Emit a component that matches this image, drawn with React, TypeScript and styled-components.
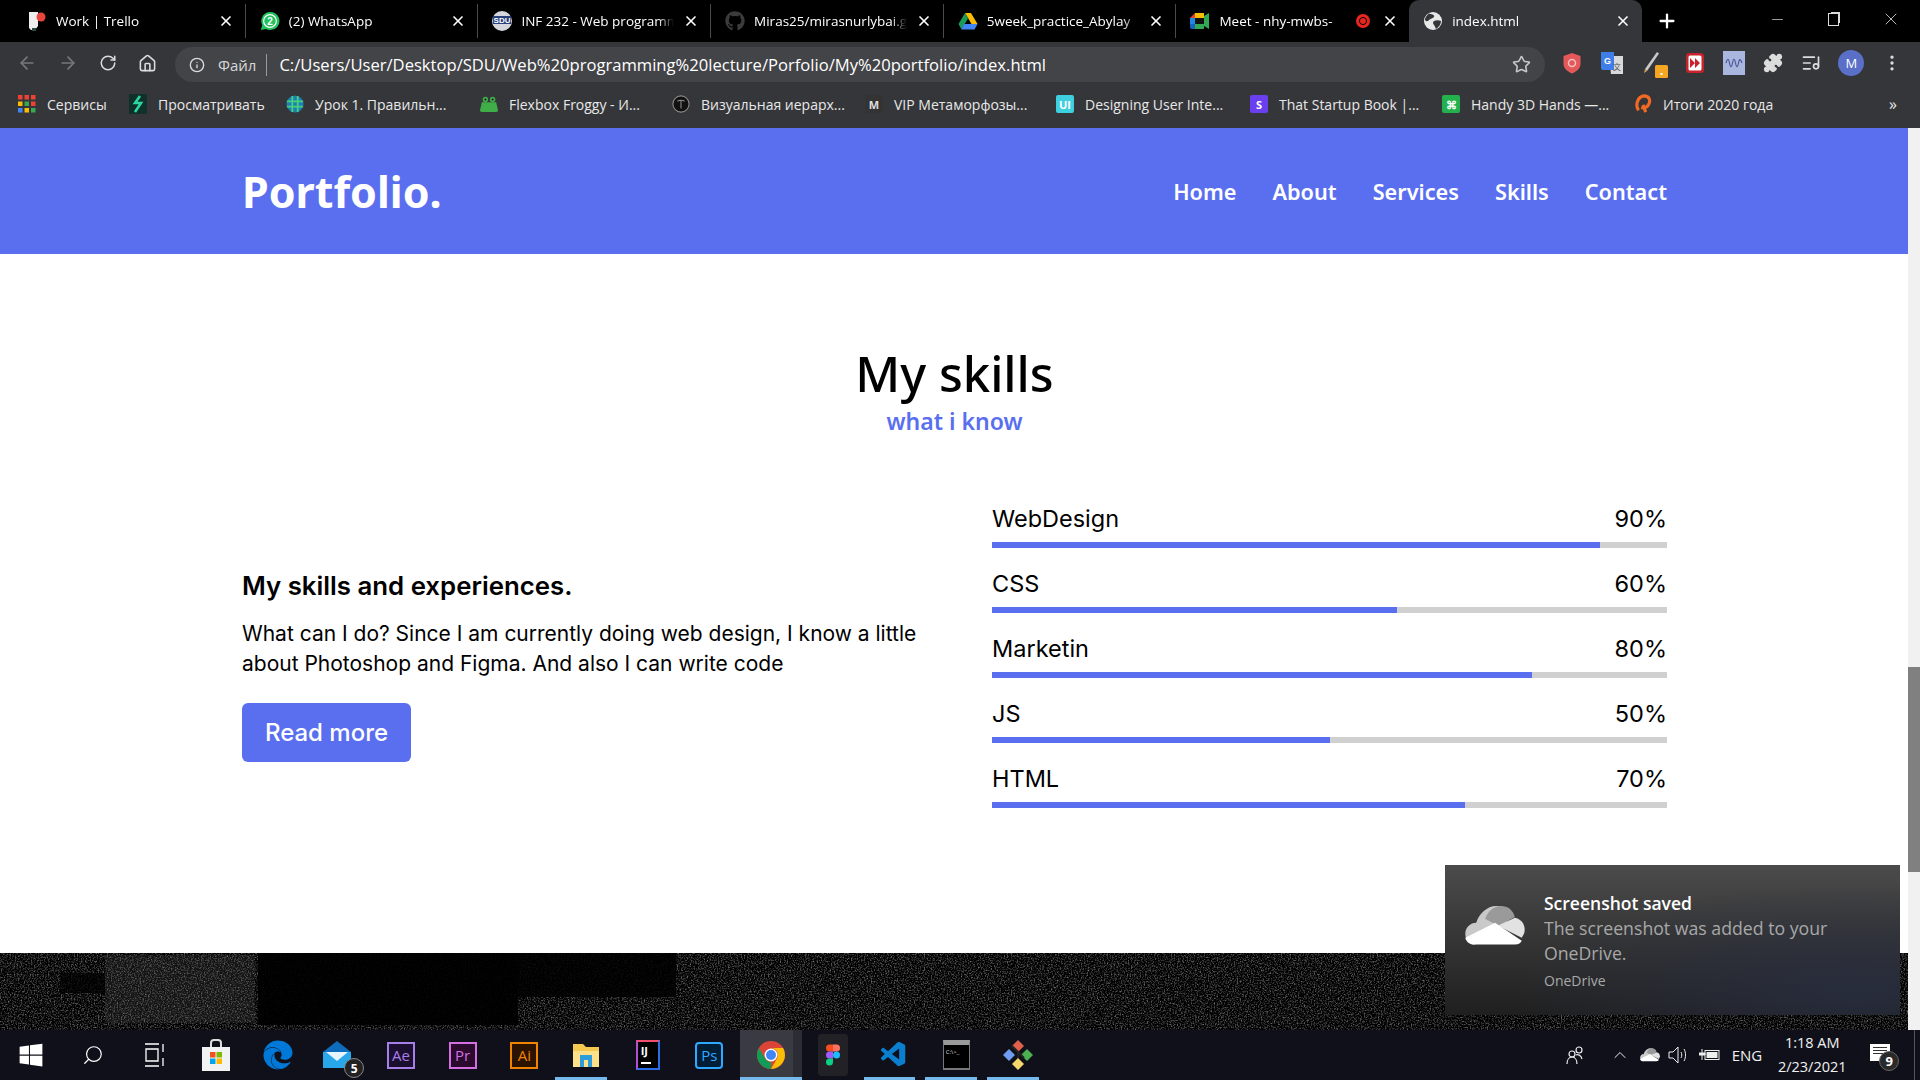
import React, { FC, ReactNode } from "react";
import styled, { createGlobalStyle } from "styled-components";
import { ArrowLeft, ArrowRight, ChevronUp, EllipsisVertical, House, Info, ListMusic, Minus, Plus, Puzzle, RotateCw, Search, Star, X } from "lucide-react";
import { FaGithub, FaWindows, FaEdge } from "react-icons/fa";
import { VscVscode } from "react-icons/vsc";

const BLUE = "#5a6ff0";

const GlobalStyle = createGlobalStyle`
  html, body { margin: 0; padding: 0; background: #000; }
  * { box-sizing: border-box; }
`;

const Drive = () => (
  <svg width="20" height="18" viewBox="0 0 20 18">
    <path d="M7 1h6l6.5 11h-6z" fill="#fbbc04" />
    <path d="M7 1l3 5.5L3.5 17.5.5 12z" fill="#1a9b57" />
    <path d="M6 12h13.5l-3 5.5h-13z" fill="#4285f4" />
  </svg>
);

const Meet = () => (
  <svg width="20" height="18" viewBox="0 0 20 18">
    <path d="M5 1h9v5H5z" fill="#fbbc04" />
    <path d="M5 1v5H0z" fill="#ea4335" />
    <path d="M0 6h5v6H0z" fill="#1e88e5" />
    <path d="M0 12h5v5H2a2 2 0 01-2-2z" fill="#1565c0" />
    <path d="M5 12h9v5H5z" fill="#34a853" />
    <path d="M14 4l5-3v16l-5-3z" fill="#34a853" />
    <path d="M5 6h9v6H5z" fill="#111" />
  </svg>
);

const TrelloFav = () => (
  <svg width="20" height="20" viewBox="0 0 20 20">
    <path d="M2 1h9v14l-3 4H4l-2-2z" fill="#eee" />
    <path d="M5 17h4v3H5z" fill="#2c4a45" />
    <circle cx="14" cy="6" r="4.5" fill="#e8453c" />
  </svg>
);

const WhatsFav = () => (
  <svg width="22" height="22" viewBox="0 0 22 22">
    <path d="M1 21l1.500-5.500A10 10 0 1111 21a10 10 0 01-4.500-1.100z" fill="#22c15e" />
    <circle cx="11" cy="11" r="7" fill="none" stroke="#fff" strokeWidth="1.300" />
    <text x="11" y="15" fontSize="11" fontWeight="700" textAnchor="middle" fill="#fff" fontFamily="Liberation Sans, sans-serif">2</text>
  </svg>
);

const SduFav = () => (
  <svg width="20" height="20" viewBox="0 0 20 20">
    <circle cx="10" cy="10" r="10" fill="#d6d6de" />
    <path d="M1 5h18v8H1z" fill="#27407c" />
    <text x="10" y="12" fontSize="8" fontWeight="700" textAnchor="middle" fill="#fff" fontFamily="Liberation Sans, sans-serif">SDU</text>
  </svg>
);

const GlobeFav = () => (
  <svg width="18" height="18" viewBox="0 0 18 18">
    <circle cx="9" cy="9" r="9" fill="#e8e8e8" />
    <path d="M5 1.500c2 1 4 .5 5 2s-2 3-3.500 3.500S4 10 2 9 1 5 5 1.500zM10 9c2-1 5-1 7 0 0 3-2 6-5 8-1-2-1-3-2-4s-1.500-3 0-4z" fill="#35363a" />
  </svg>
);

const Shield = () => (
  <svg width="20" height="22" viewBox="0 0 20 22">
    <path d="M10 1l8.5 3v8c0 4.500-4 7.500-8.500 9.500C5.500 19.500 1.500 16.500 1.500 12V4z" fill="#e5585a" />
    <circle cx="10" cy="11" r="3.500" fill="none" stroke="#f3c2c2" strokeWidth="1.500" />
  </svg>
);

const Translate = () => (
  <svg width="24" height="26" viewBox="0 0 24 26">
    <path d="M9 6h14v18H11z" fill="#d9d9d9" />
    <path d="M1 2h13v18H3a2 2 0 01-2-2z" fill="#3f7ee8" />
    <text x="7.500" y="14" fontSize="9" fontWeight="700" textAnchor="middle" fill="#fff" fontFamily="Liberation Sans, sans-serif">G</text>
    <text x="17" y="20" fontSize="8" textAnchor="middle" fill="#555" fontFamily="Noto Sans CJK SC, sans-serif">文</text>
  </svg>
);

const Pen = () => (
  <svg width="26" height="30" viewBox="0 0 26 30">
    <path d="M3 21L15 4l2 1.500L5 23z" fill="#c9c9c9" />
    <path d="M3 21l2 2-3 2z" fill="#d9a441" />
    <rect x="13" y="17" width="13" height="13" rx="1.500" fill="#f5a623" />
    <rect x="18.500" y="25" width="2" height="2" fill="#fff" />
  </svg>
);

const RedExt = () => (
  <svg width="20" height="22" viewBox="0 0 20 22">
    <rect x="1" y="1" width="18" height="20" rx="3.500" fill="#c8232c" />
    <rect x="3.500" y="3.500" width="13" height="15" rx="1.500" fill="#fff" />
    <path d="M5 6l5 5-5 5zM10 6l5 5-5 5z" fill="#c8232c" />
  </svg>
);

const WaveExt = () => (
  <svg width="22" height="24" viewBox="0 0 22 24">
    <rect width="22" height="24" fill="#a9b6de" />
    <path d="M3 12c1.500-5 2.500-5 3.500 0s2 5 3 0 2-5 3 0 2 5 3 0 2-4 3.500 0" fill="none" stroke="#4a5a9a" strokeWidth="1.200" />
  </svg>
);

const Grid9 = () => (
  <svg width="18" height="18" viewBox="0 0 18 18">
    {["#ea4335", "#ea4335", "#ea4335", "#fbbc04", "#34a853", "#ea4335", "#4285f4", "#fbbc04", "#34a853"].map((c, i) => (
      <rect key={i} x={(i % 3) * 6.500} y={Math.floor(i / 3) * 6.500} width="4.500" height="4.500" fill={c} />
    ))}
  </svg>
);

const Zigzag = () => (
  <svg width="18" height="20" viewBox="0 0 18 20">
    <rect width="18" height="20" fill="#10302b" />
    <path d="M11 2L6 9h6l-6 9" fill="none" stroke="#2bd9a0" strokeWidth="2.500" />
  </svg>
);

const StripedGlobe = () => (
  <svg width="20" height="20" viewBox="0 0 20 20">
    <circle cx="10" cy="10" r="9.500" fill="#1c7fb8" />
    <path d="M7 1v18M13 1v18M1 7h18M1 13h18" stroke="#46d07a" strokeWidth="2" />
  </svg>
);

const Frog = () => (
  <svg width="20" height="18" viewBox="0 0 20 18">
    <circle cx="6" cy="4" r="3" fill="#3fae49" />
    <circle cx="14" cy="4" r="3" fill="#3fae49" />
    <path d="M2 7h16l2 9a2 2 0 01-2 2H2a2 2 0 01-2-2z" fill="#3fae49" />
    <circle cx="6" cy="4" r="1" fill="#111" />
    <circle cx="14" cy="4" r="1" fill="#111" />
  </svg>
);

const RingT = () => (
  <svg width="20" height="20" viewBox="0 0 20 20" fill="none" stroke="#8a8a8a" strokeWidth="1.200">
    <circle cx="10" cy="10" r="9" fill="#111" />
    <path d="M6 7c2-1.500 6-1.500 8 0M10 6v9" />
  </svg>
);

const OrangeQ = () => (
  <svg width="20" height="22" viewBox="0 0 20 22" fill="none" stroke="#f26a21" strokeWidth="3.500">
    <path d="M5 18C1 12 4 3 11 2c6 0 8 5 5 10-2 3-5 4-8 3M10 12l3 8" />
  </svg>
);

const Mark: FC<{ bg: string; children?: ReactNode }> = ({ bg, children }) => (
  <MarkBox $bg={bg}>{children}</MarkBox>
);

const links = ["Home", "About", "Services", "Skills", "Contact"];

const skills = [
  { name: "WebDesign", value: 90 },
  { name: "CSS", value: 60 },
  { name: "Marketin", value: 80 },
  { name: "JS", value: 50 },
  { name: "HTML", value: 70 },
];

const App: FC = () => {
  const tabs = [
    { title: "Work | Trello", icon: <TrelloFav /> },
    { title: "(2) WhatsApp", icon: <WhatsFav /> },
    { title: "INF 232 - Web programming", icon: <SduFav /> },
    { title: "Miras25/mirasnurlybai.github.io", icon: <FaGithub size={20} color="#3b3b3b" /> },
    { title: "5week_practice_Abylay", icon: <Drive /> },
    { title: "Meet - nhy-mwbs-", icon: <Meet />, recording: true },
    { title: "index.html", icon: <GlobeFav />, active: true },
  ];

  const bookmarks = [
    { w: 111, title: "Сервисы", icon: <Grid9 /> },
    { w: 157, title: "Просматривать", icon: <Zigzag /> },
    { w: 194, title: "Урок 1. Правильн...", icon: <StripedGlobe /> },
    { w: 192, title: "Flexbox Froggy - И...", icon: <Frog /> },
    { w: 193, title: "Визуальная иерарх...", icon: <RingT /> },
    { w: 191, title: "VIP Метаморфозы...", icon: <Mark bg="#333"><MarkText $c="#ddd">M</MarkText></Mark> },
    { w: 194, title: "Designing User Inte...", icon: <Mark bg="#3fd0e0"><MarkText $c="#fff">UI</MarkText></Mark> },
    { w: 192, title: "That Startup Book |...", icon: <Mark bg="#6a3ff0"><MarkText $c="#fff">S</MarkText></Mark> },
    { w: 192, title: "Handy 3D Hands —...", icon: <Mark bg="#22b14c"><MarkText $c="#fff">⌘</MarkText></Mark> },
    { w: 220, title: "Итоги 2020 года", icon: <OrangeQ /> },
  ];

  return (
  <Screen>
    <GlobalStyle />
    <TabStrip>
      {tabs.map((t) => (
        <Tab key={t.title} $active={t.active}>
          <TabIcon>{t.icon}</TabIcon>
          <TabTitle>{t.title}</TabTitle>
          {t.recording && <RecDot />}
          <X size={16} strokeWidth={2.5} color="#fff" />
        </Tab>
      ))}
      <NewTab><Plus size={22} strokeWidth={2.5} color="#fff" /></NewTab>
      <WindowControls>
        <Minus size={17} strokeWidth={1} color="#ddd" />
        <RestoreBox />
        <X size={20} strokeWidth={1} color="#ddd" />
      </WindowControls>
    </TabStrip>

    <Toolbar>
      <NavButtons>
        <ArrowLeft size={20} color="#76787c" />
        <ArrowRight size={20} color="#76787c" />
        <RotateCw size={18} color="#dcdcdc" />
        <House size={19} color="#dcdcdc" />
      </NavButtons>
      <Omnibox>
        <Info size={16} color="#dcdcdc" />
        <FileLabel>Файл</FileLabel>
        <UrlText>C:/Users/User/Desktop/SDU/Web%20programming%20lecture/Porfolio/My%20portfolio/index.html</UrlText>
        <Star size={19} color="#c8c8c8" />
      </Omnibox>
      <Extensions>
        <Shield />
        <Translate />
        <Pen />
        <RedExt />
        <WaveExt />
        <Puzzle size={20} color="#dcdcdc" fill="#dcdcdc" />
        <ListMusic size={20} color="#dcdcdc" />
        <Avatar>M</Avatar>
        <EllipsisVertical size={20} color="#dcdcdc" />
      </Extensions>
    </Toolbar>

    <BookmarksBar>
      {bookmarks.map((b) => (
        <Bookmark key={b.title} $w={b.w}>
          <BookmarkIcon>{b.icon}</BookmarkIcon>
          {b.title}
        </Bookmark>
      ))}
      <MoreMarks>»</MoreMarks>
    </BookmarksBar>

    <Viewport>
      <Page>
        <NavBar>
          <Logo>Portfolio.</Logo>
          <NavLinks>
            {links.map((l) => <NavLink key={l}>{l}</NavLink>)}
          </NavLinks>
        </NavBar>

        <Section>
          <SectionTitle>My skills</SectionTitle>
          <SectionSub>what i know</SectionSub>
          <Columns>
            <About>
              <AboutTitle>My skills and experiences.</AboutTitle>
              <AboutText>What can I do? Since I am currently doing web design, I know a little about Photoshop and Figma. And also I can write code</AboutText>
              <ReadMore>Read more</ReadMore>
            </About>
            <Bars>
              {skills.map((s) => (
                <Skill key={s.name}>
                  <SkillHead>
                    <span>{s.name}</span>
                    <span>{s.value}%</span>
                  </SkillHead>
                  <Track><Fill style={{ width: `${s.value}%` }} /></Track>
                </Skill>
              ))}
            </Bars>
          </Columns>
        </Section>

        <Footer>
          <FooterNoise viewBox="0 0 1908 77" preserveAspectRatio="none">
            <filter id="grain" x="0" y="0" width="100%" height="100%">
              <feTurbulence type="fractalNoise" baseFrequency="0.7" numOctaves="3" seed="4" />
              <feColorMatrix values="0 0 0 0 1 0 0 0 0 1 0 0 0 0 1 0 0 0 1.800 -0.780" />
            </filter>
            <rect width="1908" height="77" filter="url(#grain)" opacity="0.55" />
            <rect x="105" y="2" width="150" height="68" fill="#555" opacity="0.22" />
            <rect x="258" y="0" width="260" height="72" fill="#000" opacity="0.92" />
            <rect x="518" y="0" width="158" height="44" fill="#000" opacity="0.85" />
            <rect x="60" y="20" width="45" height="20" fill="#000" opacity="0.7" />
          </FooterNoise>
        </Footer>
      </Page>
      <Scrollbar><Thumb /></Scrollbar>
    </Viewport>

    <Taskbar>
      <TaskItem><FaWindows size={26} color="#fff" /></TaskItem>
      <TaskItem><Search size={22} color="#fff" strokeWidth={1.300} style={{ transform: "scaleX(-1)" }} /></TaskItem>
      <TaskItem>
        <svg width="22" height="24" viewBox="0 0 22 24" fill="none" stroke="#fff" strokeWidth="1.300">
          <path d="M2 1h14M2 23h14M3 6h12v12H3zM20 1v8M20 15v8" />
        </svg>
      </TaskItem>
      <TaskItem>
        <svg width="30" height="32" viewBox="0 0 30 32">
          <path d="M10 8V4a3 3 0 013-3h4a3 3 0 013 3v4" fill="none" stroke="#ddd" strokeWidth="2" />
          <rect x="1" y="8" width="28" height="24" fill="#f2f2f2" />
          <rect x="9" y="13" width="5.500" height="5.500" fill="#f25022" />
          <rect x="15.500" y="13" width="5.500" height="5.500" fill="#7fba00" />
          <rect x="9" y="19.500" width="5.500" height="5.500" fill="#00a4ef" />
          <rect x="15.500" y="19.500" width="5.500" height="5.500" fill="#ffb900" />
        </svg>
      </TaskItem>
      <TaskItem><FaEdge size={30} color="#0078d7" /></TaskItem>
      <TaskItem>
        <svg width="34" height="30" viewBox="0 0 34 30">
          <path d="M15 1l14 11v16H1V12z" fill="#0f6cbd" />
          <path d="M1 12h28v16H1z" fill="#28a8ea" />
          <path d="M4 12h22l-11 9z" fill="#e8f4fc" />
        </svg>
        <Badge>5</Badge>
      </TaskItem>
      <TaskItem><AdobeTile $c="#a77fe8" $bg="#1b0f30">Ae</AdobeTile></TaskItem>
      <TaskItem><AdobeTile $c="#d56ee0" $bg="#2a0a2d">Pr</AdobeTile></TaskItem>
      <TaskItem><AdobeTile $c="#f08300" $bg="#2b1300">Ai</AdobeTile></TaskItem>
      <TaskItem $open>
        <svg width="28" height="28" viewBox="0 0 28 28">
          <path d="M1 3h10l3 3h13v20H1z" fill="#f5c94f" />
          <path d="M1 10h26v16H1z" fill="#ffe08a" />
          <path d="M8 14h12v12h-4v-7h-4v7H8z" fill="#2d9cdb" />
        </svg>
      </TaskItem>
      <TaskItem>
        <IdeaTile><IdeaText>IJ</IdeaText><IdeaBar /></IdeaTile>
      </TaskItem>
      <TaskItem><AdobeTile $c="#31a8ff" $bg="#001e36" $round>Ps</AdobeTile></TaskItem>
      <TaskItem $open $current>
        <svg width="30" height="30" viewBox="0 0 30 30">
          <circle cx="15" cy="15" r="14" fill="#db4437" />
          <path d="M15 29A14 14 0 012.900 8L9 18.500a7 7 0 006 3.500z" fill="#0f9d58" />
          <path d="M27.100 8A14 14 0 0115 29l6-10.500A7 7 0 0015 8z" fill="#fbbc04" />
          <circle cx="15" cy="15" r="6.500" fill="#fff" />
          <circle cx="15" cy="15" r="5" fill="#4285f4" />
        </svg>
      </TaskItem>
      <TaskItem>
        <FigmaTile>
          <svg width="14" height="22" viewBox="0 0 14 21">
            <path d="M3.500 0H7v7H3.500a3.500 3.500 0 010-7z" fill="#f24e1e" />
            <path d="M7 0h3.500a3.500 3.500 0 010 7H7z" fill="#ff7262" />
            <path d="M3.500 7H7v7H3.500a3.500 3.500 0 010-7z" fill="#a259ff" />
            <circle cx="10.500" cy="10.500" r="3.500" fill="#1abcfe" />
            <path d="M3.500 14H7v3.500A3.500 3.500 0 113.500 14z" fill="#0acf83" />
          </svg>
        </FigmaTile>
      </TaskItem>
      <TaskItem $open><VscVscode size={30} color="#0a7fd0" /></TaskItem>
      <TaskItem $open>
        <TerminalTile><TerminalPrompt>C:\&gt;_</TerminalPrompt></TerminalTile>
      </TaskItem>
      <TaskItem $open>
        <svg width="30" height="30" viewBox="0 0 30 30">
          <path d="M15 0l6 6-6 6-6-6z" fill="#e0604c" />
          <path d="M6 9l6 6-6 6-6-6z" fill="#6f9bf0" />
          <path d="M24 9l6 6-6 6-6-6z" fill="#4caf50" />
          <path d="M15 18l6 6-6 6-6-6z" fill="#f5d76e" />
          <path d="M9 6l12 12M15 12v6" stroke="#222" strokeWidth="2" />
        </svg>
      </TaskItem>
      <Tray>
        <TraySlot $ml={516}>
          <svg width="20" height="20" viewBox="0 0 20 20" fill="none" stroke="#eee" strokeWidth="1.200">
            <circle cx="14" cy="5" r="3" />
            <circle cx="7" cy="9" r="3" />
            <path d="M2 19c0-4 2-7 5-7s5 3 5 7M11 10c2-1 5 0 6 4" />
          </svg>
        </TraySlot>
        <TraySlot $ml={25}><ChevronUp size={20} strokeWidth={1.200} color="#eee" /></TraySlot>
        <TraySlot $ml={10}><Cloud width={20} /></TraySlot>
        <TraySlot $ml={8}>
          <svg width="20" height="20" viewBox="0 0 20 20" fill="none" stroke="#eee" strokeWidth="1">
            <path d="M1 7h4l5-5v16l-5-5H1zM13 7c1 2 1 4 0 6M16 4c2 3 2 9 0 12" />
          </svg>
        </TraySlot>
        <TraySlot $ml={11}>
          <svg width="22" height="14" viewBox="0 0 22 14">
            <path d="M3 1v4M0 5h6v2H0zM3 7v5" stroke="#eee" fill="#eee" strokeWidth="1" />
            <rect x="6" y="2.500" width="14" height="9" fill="none" stroke="#eee" strokeWidth="1" />
            <rect x="7.500" y="4" width="11" height="6" fill="#eee" />
          </svg>
        </TraySlot>
        <TraySlot $ml={11}>ENG</TraySlot>
        <Clock><span>1:18 AM</span><span>2/23/2021</span></Clock>
        <Notify>
          <NotifyBox><NotifyLine /><NotifyLine /><NotifyLine /></NotifyBox>
          <NotifyCount>9</NotifyCount>
        </Notify>
        <DesktopEdge />
      </Tray>
    </Taskbar>

    <Toast>
      <ToastIcon><Cloud width={60} /></ToastIcon>
      <ToastBody>
        <ToastTitle>Screenshot saved</ToastTitle>
        <ToastText>The screenshot was added to your OneDrive.</ToastText>
        <ToastSource>OneDrive</ToastSource>
      </ToastBody>
    </Toast>
  </Screen>
  );
};

const Cloud: FC<{ width: number }> = ({ width }) => (
  <svg width={width} height={width * 0.66} viewBox="0 0 60 40">
    <path d="M10 40C3 40 0 34 0 29c0-6 5-11 11-11 3-10 12-18 22-17 6 0 12 4 15 11l-20 15z" fill="#c9c9c9" />
    <path d="M20 14c3-8 9-13 16-13 7 0 12 4 14 11L33 21z" fill="#9a9a9a" />
    <path d="M33 21l17-8c6 1 10 6 10 12 0 3-1 5-3 8z" fill="#e2e2e2" />
    <path d="M10 40c-6 0-9-3-10-7l30-15 27 18c-1 2-3 4-7 4z" fill="#fff" />
  </svg>
);

export default App;

const Screen = styled.div`
  position: relative;
  width: 1920px;
  height: 1080px;
  display: flex;
  flex-direction: column;
  overflow: hidden;
  background: #fff;
`;

const TabStrip = styled.div`
  height: 42px;
  display: flex;
  align-items: flex-end;
  padding-left: 13px;
  background: #000;
  font-family: "Open Sans", sans-serif;
`;

const Tab = styled.div<{ $active?: boolean }>`
  width: 232.7px;
  height: ${(p) => (p.$active ? "42px" : "34px")};
  margin-bottom: ${(p) => (p.$active ? "0" : "4px")};
  display: flex;
  align-items: center;
  gap: 9px;
  padding: 0 11px 0 14px;
  color: #fff;
  font-size: 13.5px;
  background: ${(p) => (p.$active ? "#35363a" : "transparent")};
  border-radius: ${(p) => (p.$active ? "10px 10px 0 0" : "0")};
  border-right: ${(p) => (p.$active ? "none" : "1px solid #4a4a4a")};
  &:nth-child(6) {
    border-right: none;
  }
`;

const TabIcon = styled.span`
  width: 20px;
  display: flex;
  justify-content: center;
  flex-shrink: 0;
`;

const TabTitle = styled.span`
  flex: 1;
  white-space: nowrap;
  overflow: hidden;
  min-width: 0;
  mask-image: linear-gradient(90deg, #000 calc(100% - 16px), transparent);
`;

const RecDot = styled.span`
  width: 14px;
  height: 14px;
  flex-shrink: 0;
  margin-right: 3px;
  border-radius: 50%;
  background: #e8251f;
  border: 3px solid #e8251f;
  box-shadow: inset 0 0 0 1px #000;
`;

const NewTab = styled.div`
  width: 50px;
  height: 38px;
  display: flex;
  align-items: center;
  justify-content: center;
  margin-bottom: 2px;
`;

const WindowControls = styled.div`
  flex: 1;
  height: 42px;
  display: flex;
  align-items: center;
  justify-content: flex-end;
  gap: 42px;
  padding: 0 19px 4px 0;
`;

const RestoreBox = styled.span`
  width: 11px;
  height: 13px;
  border: 1px solid #ddd;
  box-shadow: 2px -2px 0 -1px #ddd;
`;

const Toolbar = styled.div`
  height: 42px;
  display: flex;
  align-items: center;
  background: #35363a;
  font-family: "Open Sans", sans-serif;
`;

const NavButtons = styled.div`
  width: 175px;
  display: flex;
  align-items: center;
  gap: 21px;
  padding-left: 17px;
`;

const Omnibox = styled.div`
  width: 1370px;
  height: 35px;
  display: flex;
  align-items: center;
  padding: 0 14px;
  margin-top: 3px;
  border-radius: 18px;
  background: #434448;
  color: #fff;
  font-size: 16.6px;
`;

const FileLabel = styled.span`
  margin-left: 13px;
  padding-right: 10px;
  font-size: 15px;
  color: #d8d8d8;
  border-right: 1px solid #9a9a9a;
  line-height: 22px;
`;

const UrlText = styled.span`
  flex: 1;
  margin-left: 12px;
  white-space: nowrap;
`;

const Extensions = styled.div`
  flex: 1;
  display: flex;
  align-items: center;
  justify-content: space-between;
  padding: 0 18px 0 17px;
`;

const Avatar = styled.span`
  width: 26px;
  height: 26px;
  display: flex;
  align-items: center;
  justify-content: center;
  border-radius: 50%;
  background: #5a6fc8;
  color: #fff;
  font-size: 13px;
`;

const BookmarksBar = styled.div`
  height: 44px;
  display: flex;
  align-items: center;
  padding: 0 0 4px 18px;
  background: #35363a;
  color: #e8e8e8;
  font-family: "Open Sans", sans-serif;
  font-size: 14px;
`;

const Bookmark = styled.div<{ $w: number }>`
  width: ${(p) => p.$w}px;
  display: flex;
  align-items: center;
  gap: 11px;
  white-space: nowrap;
`;

const BookmarkIcon = styled.span`
  width: 18px;
  display: flex;
  justify-content: center;
`;

const MarkBox = styled.span<{ $bg: string }>`
  width: 18px;
  height: 18px;
  display: flex;
  align-items: center;
  justify-content: center;
  border-radius: 2px;
  background: ${(p) => p.$bg};
  overflow: hidden;
`;

const MarkText = styled.span<{ $c: string }>`
  font-size: 11px;
  font-weight: 700;
  color: ${(p) => p.$c};
`;

const MoreMarks = styled.span`
  margin-left: auto;
  margin-right: 23px;
  font-size: 16px;
`;

const Viewport = styled.div`
  height: 902px;
  display: flex;
`;

const Page = styled.div`
  flex: 1;
  display: flex;
  flex-direction: column;
  min-width: 0;
`;

const NavBar = styled.nav`
  height: 126px;
  display: flex;
  align-items: center;
  justify-content: space-between;
  padding: 0 241px 0 242px;
  background: ${BLUE};
  color: #fff;
  font-family: "Noto Sans", sans-serif;
`;

const Logo = styled.div`
  font-size: 43px;
  font-weight: 700;
`;

const NavLinks = styled.div`
  display: flex;
  gap: 36px;
`;

const NavLink = styled.a`
  font-size: 21.7px;
  font-weight: 600;
`;

const Section = styled.section`
  flex: 1;
  display: flex;
  flex-direction: column;
  padding: 91px 241px 0 242px;
  background: #fff;
  color: #000;
`;

const SectionTitle = styled.h2`
  margin: 0;
  text-align: center;
  font-family: "Noto Sans", sans-serif;
  font-size: 49px;
  font-weight: 500;
  line-height: 56px;
`;

const SectionSub = styled.div`
  margin-top: 5px;
  text-align: center;
  font-family: "Noto Sans", sans-serif;
  font-size: 23px;
  font-weight: 600;
  line-height: 30px;
  color: ${BLUE};
`;

const Columns = styled.div`
  margin-top: 67px;
  display: grid;
  grid-template-columns: 675px 675px;
  column-gap: 75px;
  font-family: Inter, sans-serif;
`;

const About = styled.div`
  padding-top: 65px;
`;

const AboutTitle = styled.h3`
  margin: 0 0 15px;
  font-size: 25.8px;
  font-weight: 600;
  line-height: 36px;
`;

const AboutText = styled.p`
  margin: 0 0 24px;
  font-size: 21px;
  line-height: 30px;
`;

const ReadMore = styled.button`
  width: 169px;
  height: 59px;
  padding: 0;
  border: none;
  border-radius: 6px;
  background: ${BLUE};
  color: #fff;
  font-family: inherit;
  font-size: 24px;
  font-weight: 500;
`;

const Bars = styled.div`
  display: flex;
  flex-direction: column;
  gap: 20px;
`;

const Skill = styled.div`
  display: flex;
  flex-direction: column;
  gap: 7px;
`;

const SkillHead = styled.div`
  display: flex;
  justify-content: space-between;
  font-size: 23.5px;
  line-height: 32px;
`;

const Track = styled.div`
  height: 6px;
  background: #d0d0d0;
`;

const Fill = styled.div`
  height: 100%;
  background: ${BLUE};
`;

const Footer = styled.footer`
  height: 77px;
  background: #000;
`;

const FooterNoise = styled.svg`
  display: block;
  width: 100%;
  height: 100%;
`;

const Scrollbar = styled.div`
  width: 12px;
  padding-top: 539px;
  background: #f1f1f1;
`;

const Thumb = styled.div`
  height: 205px;
  background: #808080;
`;

const Taskbar = styled.div`
  flex: 1;
  display: flex;
  background: #10101a;
  font-family: "Open Sans", sans-serif;
`;

const TaskItem = styled.div<{ $open?: boolean; $current?: boolean }>`
  position: relative;
  width: 61.7px;
  display: flex;
  align-items: center;
  justify-content: center;
  background: ${(p) => (p.$current ? "linear-gradient(90deg, #3a3a42 85%, #2c2c34 85%)" : "transparent")};
  &::after {
    content: "";
    display: ${(p) => (p.$open ? "block" : "none")};
    position: absolute;
    left: 0;
    right: ${(p) => (p.$current ? "0" : "10px")};
    bottom: 0;
    height: 3px;
    background: #76b9ed;
  }
`;

const Badge = styled.span`
  position: absolute;
  right: 6px;
  bottom: 2px;
  width: 20px;
  height: 20px;
  display: flex;
  align-items: center;
  justify-content: center;
  border-radius: 50%;
  border: 1px solid #888;
  background: #222;
  color: #fff;
  font-size: 12px;
  font-weight: 700;
`;

const AdobeTile = styled.span<{ $c: string; $bg: string; $round?: boolean }>`
  width: 28px;
  height: 27px;
  display: flex;
  align-items: center;
  justify-content: center;
  border: 2px solid ${(p) => p.$c};
  border-radius: ${(p) => (p.$round ? "4px" : "0")};
  background: ${(p) => p.$bg};
  color: ${(p) => p.$c};
  font-size: 15px;
`;

const IdeaTile = styled.span`
  width: 24px;
  height: 30px;
  display: flex;
  flex-direction: column;
  padding: 3px;
  background: #000;
  border: 2px solid;
  border-color: #f0506e #2a6de8 #2a6de8 #b44fd0;
`;

const IdeaText = styled.span`
  color: #fff;
  font-size: 11px;
  font-weight: 700;
  line-height: 12px;
`;

const IdeaBar = styled.span`
  width: 10px;
  height: 2px;
  margin-top: 5px;
  background: #fff;
`;

const FigmaTile = styled.span`
  width: 30px;
  height: 42px;
  display: flex;
  align-items: center;
  justify-content: center;
  border-radius: 4px;
  background: #222226;
`;

const TerminalTile = styled.span`
  width: 27px;
  height: 30px;
  padding: 4px 2px;
  background: #000;
  border-top: 5px solid #999;
  border-left: 1px solid #777;
  border-right: 1px solid #777;
  border-bottom: 2px solid #777;
`;

const TerminalPrompt = styled.span`
  display: block;
  color: #ddd;
  font-size: 6px;
  line-height: 7px;
`;

const Tray = styled.div`
  flex: 1;
  display: flex;
  align-items: center;
  color: #f0f0f0;
  font-size: 15px;
`;

const TraySlot = styled.span<{ $ml: number }>`
  margin-left: ${(p) => p.$ml}px;
  display: flex;
`;

const Clock = styled.div`
  width: 90px;
  margin-left: 5px;
  display: flex;
  flex-direction: column;
  align-items: center;
  font-size: 14.5px;
  line-height: 24px;
`;

const Notify = styled.div`
  position: relative;
  margin-left: 13px;
  width: 24px;
  height: 22px;
`;

const NotifyBox = styled.div`
  width: 20px;
  height: 17px;
  display: flex;
  flex-direction: column;
  gap: 2px;
  padding: 3px;
  background: #fff;
`;

const NotifyLine = styled.span`
  height: 1px;
  background: #333;
`;

const NotifyCount = styled.span`
  position: absolute;
  left: 9px;
  top: 7px;
  width: 20px;
  height: 20px;
  display: flex;
  align-items: center;
  justify-content: center;
  border-radius: 50%;
  border: 1px solid #666;
  background: #2a2a2a;
  color: #fff;
  font-size: 13px;
  font-weight: 700;
`;

const DesktopEdge = styled.span`
  align-self: stretch;
  width: 1px;
  margin-left: auto;
  margin-right: 5px;
  background: #555;
`;

const Toast = styled.div`
  position: absolute;
  left: 1445px;
  top: 865px;
  width: 455px;
  height: 150px;
  display: flex;
  background:
    radial-gradient(ellipse at 90% 85%, rgba(40, 46, 66, 0.8), transparent 60%),
    linear-gradient(180deg, #4b4b4b, #1f1f1f);
  font-family: "Open Sans", sans-serif;
`;

const ToastIcon = styled.div`
  width: 99px;
  padding: 40px 0 0 20px;
`;

const ToastBody = styled.div`
  flex: 1;
  padding: 25px 40px 0 0;
`;

const ToastTitle = styled.div`
  color: #fff;
  font-size: 17.5px;
  font-weight: 600;
  line-height: 26px;
`;

const ToastText = styled.div`
  color: #a8a8a8;
  font-size: 17.7px;
  line-height: 25px;
`;

const ToastSource = styled.div`
  margin-top: 5px;
  color: #a8a8a8;
  font-size: 14px;
  line-height: 20px;
`;
